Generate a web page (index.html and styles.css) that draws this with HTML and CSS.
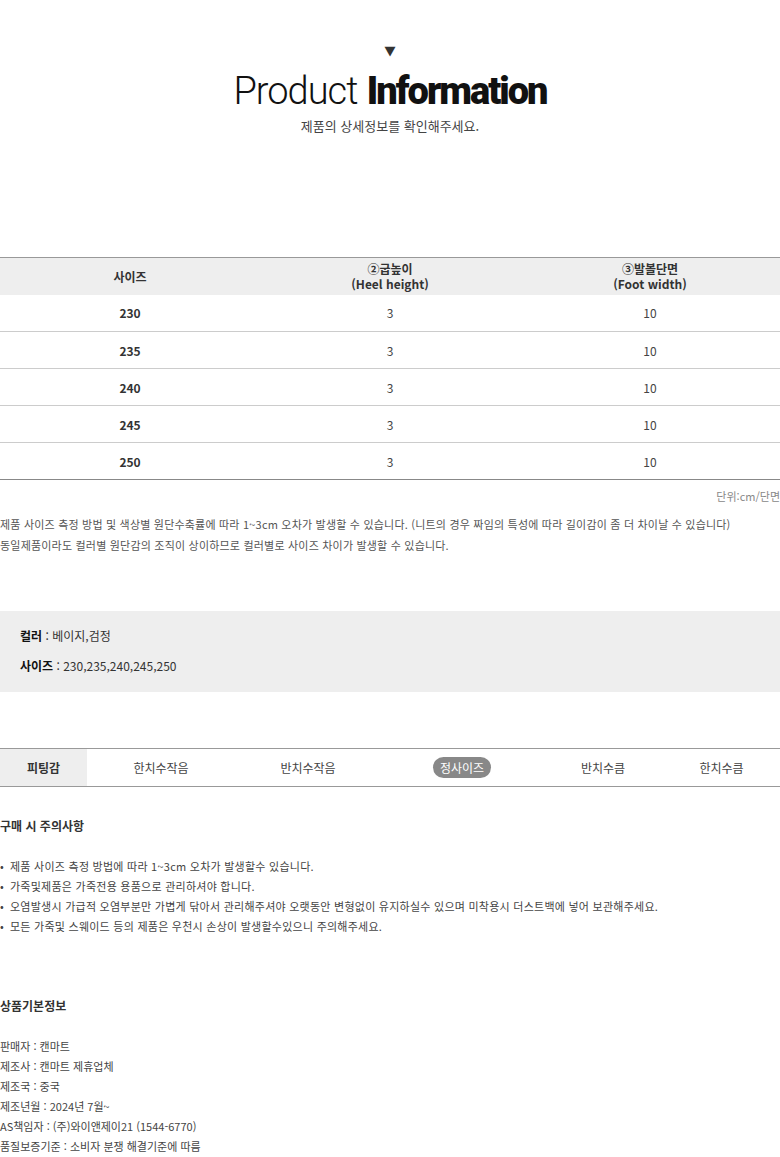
FILE: index.html
```html
<!DOCTYPE html>
<html lang="ko">
<head>
<meta charset="utf-8">
<link rel="stylesheet" href="styles.css">
</head>
<body>
<div class="page">
  <header class="head">
    <div class="arrow">▼</div>
    <h1 class="title"><span class="light">Product</span> <span class="heavy">Information</span></h1>
    <p class="sub">제품의 상세정보를 확인해주세요.</p>
  </header>

  <table class="size">
    <thead>
      <tr><th>사이즈</th><th>②굽높이<br>(Heel height)</th><th>③발볼단면<br>(Foot width)</th></tr>
    </thead>
    <tbody>
      <tr><td class="b">230</td><td>3</td><td>10</td></tr>
      <tr><td class="b">235</td><td>3</td><td>10</td></tr>
      <tr><td class="b">240</td><td>3</td><td>10</td></tr>
      <tr><td class="b">245</td><td>3</td><td>10</td></tr>
      <tr><td class="b">250</td><td>3</td><td>10</td></tr>
    </tbody>
  </table>
  <p class="unit">단위:cm/단면</p>
  <div class="notes">
    <p>제품 사이즈 측정 방법 및 색상별 원단수축률에 따라 1~3cm 오차가 발생할 수 있습니다. (니트의 경우 짜임의 특성에 따라 길이감이 좀 더 차이날 수 있습니다)</p>
    <p>동일제품이라도 컬러별 원단감의 조직이 상이하므로 컬러별로 사이즈 차이가 발생할 수 있습니다.</p>
  </div>

  <div class="opts">
    <p><b>컬러</b> : 베이지,검정</p>
    <p><b>사이즈</b> : 230,235,240,245,250</p>
  </div>

  <div class="fit">
    <div class="fit-h">피팅감</div>
    <div class="fit-c">한치수작음</div>
    <div class="fit-c">반치수작음</div>
    <div class="fit-c"><span class="pill">정사이즈</span></div>
    <div class="fit-c">반치수큼</div>
    <div class="fit-c">한치수큼</div>
  </div>

  <section class="caution">
    <h2>구매 시 주의사항</h2>
    <ul>
      <li>제품 사이즈 측정 방법에 따라 1~3cm 오차가 발생할수 있습니다.</li>
      <li>가죽및제품은 가죽전용 용품으로 관리하셔야 합니다.</li>
      <li>오염발생시 가급적 오염부분만 가볍게 닦아서 관리해주셔야 오랫동안 변형없이 유지하실수 있으며 미착용시 더스트백에 넣어 보관해주세요.</li>
      <li>모든 가죽및 스웨이드 등의 제품은 우천시 손상이 발생할수있으니 주의해주세요.</li>
    </ul>
  </section>

  <section class="info">
    <h2>상품기본정보</h2>
    <p>판매자 : 캔마트</p>
    <p>제조사 : 캔마트 제휴업체</p>
    <p>제조국 : 중국</p>
    <p>제조년월 : 2024년 7월~</p>
    <p>AS책임자 : (주)와이앤제이21 (1544-6770)</p>
    <p>품질보증기준 : 소비자 분쟁 해결기준에 따름</p>
  </section>
</div>
</body>
</html>
```

FILE: styles.css
```css
* { box-sizing: border-box; }
html, body { margin: 0; padding: 0; background: #fff; }
body {
  font-family: "Noto Sans CJK KR", "Noto Sans", sans-serif;
  font-size: 12px;
  color: #333;
}
p { margin: 0; }
.page { width: 780px; }

.head { text-align: center; padding-top: 43px; }
.arrow { font-size: 13px; line-height: 16px; color: #333; font-family: "DejaVu Sans", sans-serif; transform: scaleX(1.1); }
.title {
  margin: 10px 0 0;
  font-size: 38px;
  line-height: 44px;
  font-weight: normal;
  color: #111;
  font-family: Roboto, sans-serif;
}
.title .light { font-weight: 300; letter-spacing: -1px; }
.title .heavy { font-weight: 900; letter-spacing: -2px; }
.sub { margin-top: 4px; font-size: 13px; line-height: 18px; color: #444; }

.size {
  margin-top: 122px;
  width: 780px;
  border-collapse: collapse;
  table-layout: fixed;
  border-top: 1px solid #999;
  border-bottom: 1px solid #888;
}
.size th {
  background: #eee;
  height: 37px;
  font-size: 12px;
  line-height: 15px;
  font-weight: bold;
  color: #333;
  padding: 0;
}
.size td {
  height: 37px;
  text-align: center;
  border-top: 1px solid #ccc;
  font-size: 12px;
  color: #444;
  padding: 0;
}
.size tbody tr:first-child td { border-top: none; }
.size td.b { font-weight: bold; color: #333; }

.unit { text-align: right; margin-top: 8px; font-size: 11px; line-height: 16px; color: #888; }
.notes { margin-top: 10px; color: #555; font-size: 11px; line-height: 21px; letter-spacing: 0.2px; }

.opts {
  margin-top: 55px;
  background: #eee;
  padding: 10px 20px 11px;
  font-size: 12px;
  line-height: 30px;
  color: #333;
}
.opts b { color: #111; }

.fit {
  margin-top: 56px;
  display: grid;
  grid-template-columns: 87px 148px 146px 162px 120px 1fr;
  border-top: 1px solid #999;
  border-bottom: 1px solid #999;
  height: 39px;
  align-items: stretch;
}
.fit-h {
  background: #eee;
  font-weight: bold;
  color: #333;
  display: flex; align-items: center; justify-content: center;
}
.fit-c {
  display: flex; align-items: center; justify-content: center;
  color: #444;
}
.pill {
  background: #888;
  color: #fff;
  border-radius: 11px;
  padding: 0 7px;
  line-height: 21px;
  height: 21px;
  display: inline-block;
}

.caution { margin-top: 31px; }
h2 { margin: 0; font-size: 12px; line-height: 16px; font-weight: bold; color: #333; }
.caution ul { list-style: none; margin: 22px 0 0; padding: 0; color: #444; font-size: 11px; line-height: 20px; letter-spacing: 0.25px; }
.caution li::before { content: "•"; margin-right: 6px; }

.info { margin-top: 62px; }
.info h2 { margin-bottom: 22px; }
.info p { font-size: 11px; line-height: 20px; color: #444; }
```
